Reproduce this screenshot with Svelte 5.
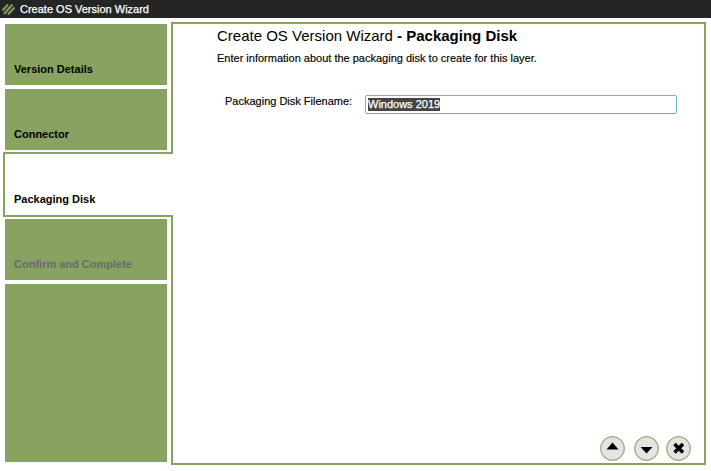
<script>
  const tabs = [
    { label: 'Version Details' },
    { label: 'Connector' },
    { label: 'Packaging Disk', active: true },
    { label: 'Confirm and Complete', disabled: true }
  ];
</script>

<div class="page">
  <header class="titlebar">
    <svg class="logo" width="14" height="14" viewBox="0 0 14 14" aria-hidden="true">
      <path d="M1.5 8.5 L7 2.5 M3 12 L11.5 2.5 M7 12.5 L13.5 5.5" stroke="#80995c" stroke-width="2.2" fill="none" />
    </svg>
    <span class="apptitle">Create OS Version Wizard</span>
  </header>

  <div class="body">
    <nav class="side">
      {#each tabs as t}
        <div class="tab" class:active={t.active} class:disabled={t.disabled}>{t.label}</div>
      {/each}
      <div class="filler"></div>
    </nav>

    <main class="panel">
      <h1>Create OS Version Wizard <b>- Packaging Disk</b></h1>
      <p class="intro">Enter information about the packaging disk to create for this layer.</p>
      <div class="field">
        <label for="fn">Packaging Disk Filename:</label>
        <div class="input" id="fn"><span class="sel">Windows 2019</span></div>
      </div>
      <div class="actions">
        <button class="up" aria-label="Previous">
          <svg width="23" height="23" viewBox="0 0 23 23"><path d="M5.5 12.5 L11.5 5.5 L17.5 12.5 Z" fill="#000" /></svg>
        </button>
        <button class="down" aria-label="Next">
          <svg width="23" height="23" viewBox="0 0 23 23"><path d="M5.5 10 L11.5 16.5 L17.5 10 Z" fill="#000" /></svg>
        </button>
        <button class="close" aria-label="Cancel">
          <svg width="23" height="23" viewBox="0 0 23 23"><path d="M7.5 7 L16 15.5 M16 7 L7.5 15.5" stroke="#000" stroke-width="3.6" fill="none" /></svg>
        </button>
      </div>
    </main>
  </div>
</div>

<style>
  :global(body) {
    margin: 0;
    background: #fff;
    font-family: "Liberation Sans", Arial, sans-serif;
  }
  .page {
    width: 711px;
    height: 471px;
    display: flex;
    flex-direction: column;
    overflow: hidden;
  }
  .titlebar {
    height: 18px;
    background: #252525;
    color: #fff;
    display: flex;
    align-items: center;
    padding-left: 1px;
    font-size: 11px;
    flex: none;
    -webkit-text-stroke: 0.25px #fff;
  }
  .logo { flex: none; }
  .apptitle { margin-left: 5px; }
  .body {
    display: flex;
    padding: 4px 5px 6px 5px;
    flex: 1;
    min-height: 0;
    align-items: flex-start;
  }
  .side {
    width: 162px;
    margin-top: 2px;
    display: flex;
    flex-direction: column;
    height: 438px;
    flex: none;
  }
  .tab {
    box-sizing: border-box;
    height: 61px;
    margin-bottom: 4px;
    background: #87a261;
    color: #000;
    font-size: 11px;
    font-weight: bold;
    padding: 0 0 10px 9px;
    display: flex;
    align-items: flex-end;
    flex: none;
  }
  .tab.active {
    position: relative;
    z-index: 1;
    height: 65px;
    margin: -2px -6px -2px -2px;
    background: #fff;
    border: 2px solid #87a261;
    border-right: none;
    padding-left: 9px;
    padding-bottom: 10px;
  }
  .tab.active + .tab { margin-top: 4px; }
  .tab.disabled { color: #6b6b6b; }
  .filler {
    flex: 1;
    background: #87a261;
  }
  .panel {
    box-sizing: border-box;
    margin-left: 4px;
    width: 535px;
    height: 443px;
    border: 2px solid #87a261;
    display: flex;
    flex-direction: column;
    padding: 2px 0 2px 44px;
  }
  h1 {
    margin: 0;
    font-size: 15px;
    font-weight: normal;
    line-height: 20px;
    color: #000;
  }
  h1 b { font-weight: bold; }
  .intro {
    margin: 5px 0 0;
    font-size: 11px;
    line-height: 14px;
    color: #000;
    -webkit-text-stroke: 0.15px #000;
  }
  .field {
    display: flex;
    align-items: flex-start;
    margin-top: 30px;
  }
  label {
    font-size: 11px;
    line-height: 14px;
    width: 148px;
    padding-left: 8px;
    box-sizing: border-box;
    color: #000;
    flex: none;
    margin-top: -1px;
    -webkit-text-stroke: 0.15px #000;
  }
  .input {
    box-sizing: border-box;
    width: 312px;
    height: 19px;
    border: 1px solid #6fb3c4;
    border-radius: 2px;
    padding: 2px 2px;
    font-size: 11px;
    line-height: 13px;
  }
  .sel {
    background: #444;
    color: #fff;
    display: inline-block;
    -webkit-text-stroke: 0.25px #fff;
  }
  .actions {
    margin-top: auto;
    margin-right: 13px;
    display: flex;
    justify-content: flex-end;
  }
  button {
    box-sizing: border-box;
    width: 25px;
    height: 25px;
    border-radius: 50%;
    border: 1px solid #8fa96e;
    box-shadow: inset 0 0 0 0.5px #a9bd8e;
    background: #e4e4e4;
    padding: 0;
    display: flex;
    align-items: center;
    justify-content: center;
    flex: none;
  }
  .up { margin-right: 9px; }
  .down { margin-right: 7px; }
</style>
